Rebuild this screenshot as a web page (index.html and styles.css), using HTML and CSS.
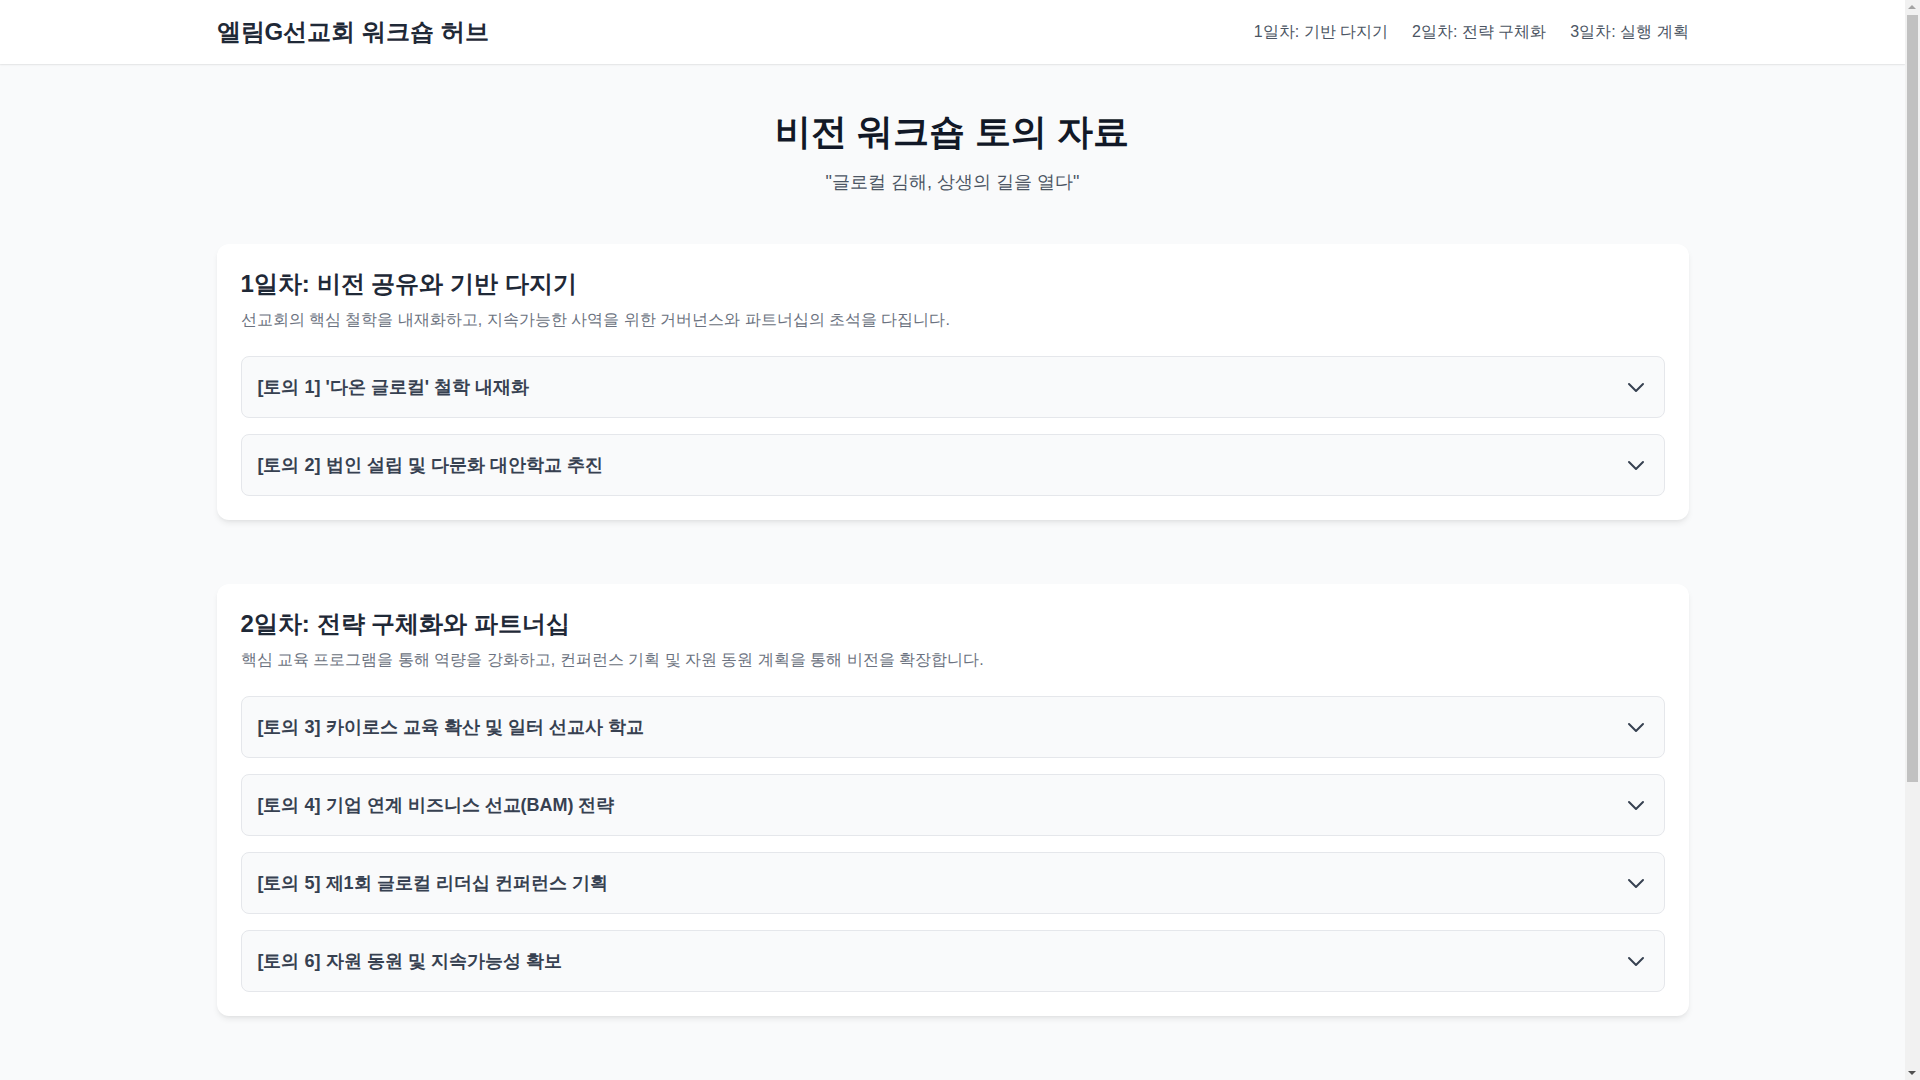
FILE: index.html
```html
<!DOCTYPE html>
<html lang="ko">
<head>
    <meta charset="UTF-8">
    <meta name="viewport" content="width=device-width, initial-scale=1.0">
    <title>엘림G선교회 워크숍 허브</title>
    <link rel="stylesheet" href="styles.css">
</head>
<body>
    <header class="site-header">
        <div class="container header-inner">
            <h1 class="brand">엘림G선교회 워크숍 허브</h1>
            <nav class="nav">
                <a href="#day1">1일차: 기반 다지기</a>
                <a href="#day2">2일차: 전략 구체화</a>
                <a href="#day3">3일차: 실행 계획</a>
            </nav>
        </div>
    </header>

    <main class="container main">
        <div class="hero">
            <h2 class="hero-title">비전 워크숍 토의 자료</h2>
            <p class="hero-sub">"글로컬 김해, 상생의 길을 열다"</p>
        </div>

        <div class="days">
            <section class="day-card" id="day1">
                <h3 class="day-title">1일차: 비전 공유와 기반 다지기</h3>
                <p class="day-desc">선교회의 핵심 철학을 내재화하고, 지속가능한 사역을 위한 거버넌스와 파트너십의 초석을 다집니다.</p>
                <div class="topics">
                    <details class="topic">
                        <summary>
                            <span>[토의 1] '다온 글로컬' 철학 내재화</span>
                            <svg class="chevron" viewBox="0 0 24 24" fill="none" stroke="currentColor" stroke-width="2"><path stroke-linecap="round" stroke-linejoin="round" d="M19 9l-7 7-7-7"/></svg>
                        </summary>
                        <div class="topic-body">'다온 글로컬'의 의미를 함께 나누고 사역 현장에 적용할 방안을 토의합니다.</div>
                    </details>
                    <details class="topic">
                        <summary>
                            <span>[토의 2] 법인 설립 및 다문화 대안학교 추진</span>
                            <svg class="chevron" viewBox="0 0 24 24" fill="none" stroke="currentColor" stroke-width="2"><path stroke-linecap="round" stroke-linejoin="round" d="M19 9l-7 7-7-7"/></svg>
                        </summary>
                        <div class="topic-body">법인 설립 절차와 다문화 대안학교 설립 로드맵을 검토합니다.</div>
                    </details>
                </div>
            </section>

            <section class="day-card" id="day2">
                <h3 class="day-title">2일차: 전략 구체화와 파트너십</h3>
                <p class="day-desc">핵심 교육 프로그램을 통해 역량을 강화하고, 컨퍼런스 기획 및 자원 동원 계획을 통해 비전을 확장합니다.</p>
                <div class="topics">
                    <details class="topic">
                        <summary>
                            <span>[토의 3] 카이로스 교육 확산 및 일터 선교사 학교</span>
                            <svg class="chevron" viewBox="0 0 24 24" fill="none" stroke="currentColor" stroke-width="2"><path stroke-linecap="round" stroke-linejoin="round" d="M19 9l-7 7-7-7"/></svg>
                        </summary>
                        <div class="topic-body">카이로스 교육과 일터 선교사 학교의 운영 방안을 논의합니다.</div>
                    </details>
                    <details class="topic">
                        <summary>
                            <span>[토의 4] 기업 연계 비즈니스 선교(BAM) 전략</span>
                            <svg class="chevron" viewBox="0 0 24 24" fill="none" stroke="currentColor" stroke-width="2"><path stroke-linecap="round" stroke-linejoin="round" d="M19 9l-7 7-7-7"/></svg>
                        </summary>
                        <div class="topic-body">지역 기업과 연계한 BAM 모델을 구체화합니다.</div>
                    </details>
                    <details class="topic">
                        <summary>
                            <span>[토의 5] 제1회 글로컬 리더십 컨퍼런스 기획</span>
                            <svg class="chevron" viewBox="0 0 24 24" fill="none" stroke="currentColor" stroke-width="2"><path stroke-linecap="round" stroke-linejoin="round" d="M19 9l-7 7-7-7"/></svg>
                        </summary>
                        <div class="topic-body">컨퍼런스의 주제, 일정, 초청 강사를 기획합니다.</div>
                    </details>
                    <details class="topic">
                        <summary>
                            <span>[토의 6] 자원 동원 및 지속가능성 확보</span>
                            <svg class="chevron" viewBox="0 0 24 24" fill="none" stroke="currentColor" stroke-width="2"><path stroke-linecap="round" stroke-linejoin="round" d="M19 9l-7 7-7-7"/></svg>
                        </summary>
                        <div class="topic-body">재정 및 인적 자원 확보 계획을 세웁니다.</div>
                    </details>
                </div>
            </section>

            <section class="day-card" id="day3">
                <h3 class="day-title">3일차: 실행 계획과 파송</h3>
                <p class="day-desc">논의된 내용을 바탕으로 구체적인 실행 계획을 수립하고 역할을 나눕니다.</p>
                <div class="topics">
                    <details class="topic">
                        <summary>
                            <span>[토의 7] 연간 실행 로드맵 수립</span>
                            <svg class="chevron" viewBox="0 0 24 24" fill="none" stroke="currentColor" stroke-width="2"><path stroke-linecap="round" stroke-linejoin="round" d="M19 9l-7 7-7-7"/></svg>
                        </summary>
                        <div class="topic-body">분기별 목표와 실행 과제를 정리합니다.</div>
                    </details>
                    <details class="topic">
                        <summary>
                            <span>[토의 8] 역할 분담 및 평가 체계 마련</span>
                            <svg class="chevron" viewBox="0 0 24 24" fill="none" stroke="currentColor" stroke-width="2"><path stroke-linecap="round" stroke-linejoin="round" d="M19 9l-7 7-7-7"/></svg>
                        </summary>
                        <div class="topic-body">팀별 역할과 성과 점검 방식을 정합니다.</div>
                    </details>
                </div>
            </section>
        </div>
    </main>

    <footer class="site-footer">
        <p>&copy; 엘림G선교회 비전 워크숍</p>
    </footer>

    <!-- window scrollbar (headless browser hides the real one) -->
    <div class="scrollbar">
        <span class="arrow arrow-up"></span>
        <span class="thumb"></span>
        <span class="arrow arrow-down"></span>
    </div>
</body>
</html>
```

FILE: styles.css
```css
* {
    box-sizing: border-box;
}
body {
    margin: 0 15px 0 0;
    font-family: sans-serif;
    background-color: #f9fafb;
    color: #1f2937;
}
.container {
    max-width: 1536px;
    margin: 0 auto;
    padding: 0 32px;
}
.site-header {
    background-color: #fff;
    box-shadow: 0 1px 2px rgba(0,0,0,0.06), 0 1px 1px rgba(0,0,0,0.03);
}
.header-inner {
    height: 64px;
    display: flex;
    align-items: center;
    justify-content: space-between;
}
.brand {
    margin: 0;
    font-size: 24px;
    line-height: 32px;
    font-weight: 700;
    color: #1f2937;
}
.nav {
    display: flex;
    gap: 24px;
}
.nav a {
    color: #4b5563;
    text-decoration: none;
    font-size: 16px;
    line-height: 24px;
}
.main {
    padding-top: 48px;
    padding-bottom: 48px;
}
.hero {
    text-align: center;
    margin-bottom: 48px;
}
.hero-title {
    margin: 0 0 16px;
    font-size: 36px;
    line-height: 40px;
    font-weight: 700;
    color: #111827;
}
.hero-sub {
    margin: 0;
    font-size: 18px;
    line-height: 28px;
    color: #4b5563;
}
.days {
    display: flex;
    flex-direction: column;
    gap: 64px;
}
.day-card {
    background-color: #fff;
    border-radius: 12px;
    padding: 24px;
    box-shadow: 0 4px 6px -1px rgba(0,0,0,0.08), 0 2px 4px -2px rgba(0,0,0,0.06);
}
.day-title {
    margin: 0 0 8px;
    font-size: 24px;
    line-height: 32px;
    font-weight: 700;
    color: #1f2937;
}
.day-desc {
    margin: 0 0 24px;
    font-size: 16px;
    line-height: 24px;
    color: #6b7280;
}
.topics {
    display: flex;
    flex-direction: column;
    gap: 16px;
}
.topic {
    background-color: #f9fafb;
    border: 1px solid #e5e7eb;
    border-radius: 8px;
}
.topic summary {
    list-style: none;
    display: flex;
    align-items: center;
    justify-content: space-between;
    padding: 16px;
    font-size: 18px;
    line-height: 28px;
    font-weight: 600;
    color: #374151;
    cursor: pointer;
}
.topic summary::-webkit-details-marker {
    display: none;
}
.chevron {
    width: 24px;
    height: 24px;
    color: #374151;
    flex-shrink: 0;
}
.topic[open] .chevron {
    transform: rotate(180deg);
}
.topic-body {
    padding: 0 16px 16px;
    color: #4b5563;
    line-height: 24px;
}
.site-footer {
    text-align: center;
    padding: 24px 0 31px;
    color: #9ca3af;
    font-size: 14px;
    line-height: 20px;
}
.site-footer p {
    margin: 0;
}
.scrollbar {
    position: fixed;
    top: 0;
    right: 0;
    width: 15px;
    height: 100vh;
    background-color: #f1f1f1;
}
.thumb {
    position: absolute;
    top: 15px;
    left: 2px;
    width: 11px;
    height: 767px;
    background-color: #c1c1c1;
}
.arrow {
    position: absolute;
    left: 3px;
    width: 0;
    height: 0;
    border-left: 4.5px solid transparent;
    border-right: 4.5px solid transparent;
}
.arrow-up {
    top: 5px;
    border-bottom: 4px solid #a3a3a3;
}
.arrow-down {
    bottom: 5px;
    border-top: 4px solid #505050;
}
```
